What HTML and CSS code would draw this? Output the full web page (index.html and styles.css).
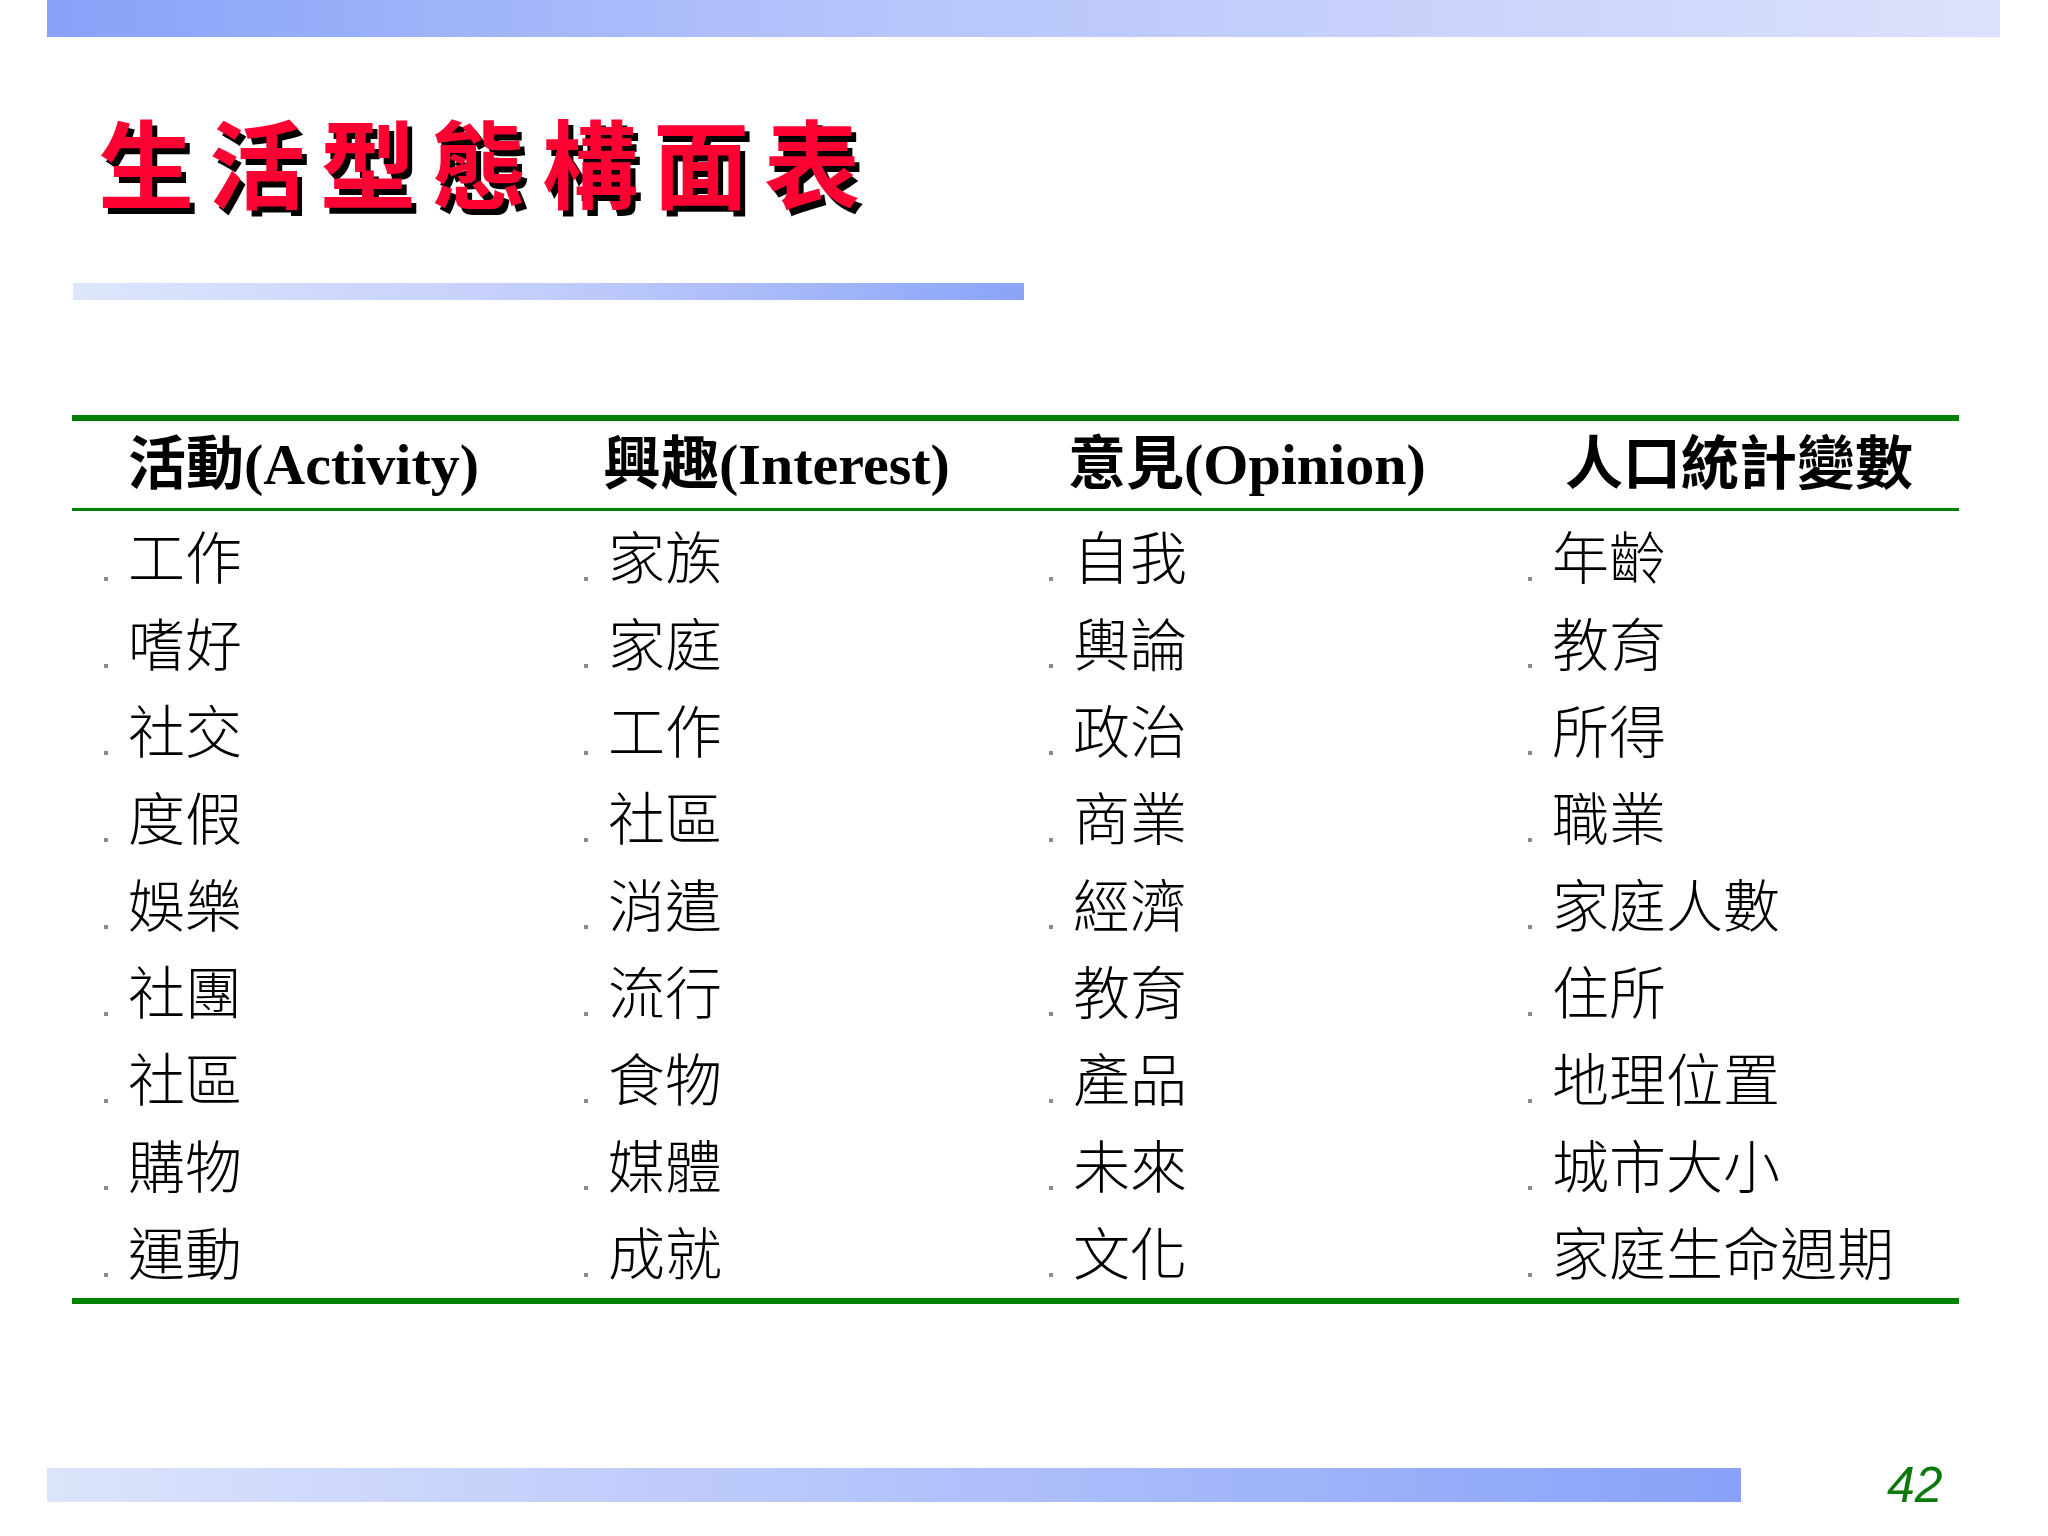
FILE: index.html
```html
<!DOCTYPE html>
<html lang="zh-Hant">
<head>
<meta charset="utf-8">
<title>生活型態構面表</title>
<link rel="stylesheet" href="styles.css">
</head>
<body>
<div class="slide">
  <div class="topbar"></div>
  <h1 class="title">生活型態構面表</h1>
  <div class="rule"></div>
  <div class="table">
    <div class="row head">
      <div class="hcell c1">活動(Activity)</div>
      <div class="hcell c2">興趣(Interest)</div>
      <div class="hcell c3">意見(Opinion)</div>
      <div class="hcell c4">人口統計變數</div>
    </div>
    <div class="body">
      <div class="row"><div class="cell">工作</div><div class="cell">家族</div><div class="cell">自我</div><div class="cell">年齡</div></div>
      <div class="row"><div class="cell">嗜好</div><div class="cell">家庭</div><div class="cell">輿論</div><div class="cell">教育</div></div>
      <div class="row"><div class="cell">社交</div><div class="cell">工作</div><div class="cell">政治</div><div class="cell">所得</div></div>
      <div class="row"><div class="cell">度假</div><div class="cell">社區</div><div class="cell">商業</div><div class="cell">職業</div></div>
      <div class="row"><div class="cell">娛樂</div><div class="cell">消遣</div><div class="cell">經濟</div><div class="cell">家庭人數</div></div>
      <div class="row"><div class="cell">社團</div><div class="cell">流行</div><div class="cell">教育</div><div class="cell">住所</div></div>
      <div class="row"><div class="cell">社區</div><div class="cell">食物</div><div class="cell">產品</div><div class="cell">地理位置</div></div>
      <div class="row"><div class="cell">購物</div><div class="cell">媒體</div><div class="cell">未來</div><div class="cell">城市大小</div></div>
      <div class="row"><div class="cell">運動</div><div class="cell">成就</div><div class="cell">文化</div><div class="cell">家庭生命週期</div></div>
    </div>
  </div>
  <div class="footer">
    <div class="footbar"></div>
    <div class="pagenum">42</div>
  </div>
</div>
</body>
</html>
```
FILE: styles.css
```css
html, body {
  margin: 0;
  padding: 0;
  background: #ffffff;
}
.slide {
  width: 2048px;
  height: 1536px;
  position: relative;
  overflow: hidden;
  font-family: "Noto Sans CJK TC", sans-serif;
}
.topbar {
  margin-left: 47px;
  width: 1953px;
  height: 37px;
  background: linear-gradient(to right, #88a2f8 0%, #b4c3fb 40%, #dde1fb 100%);
}
.title {
  margin: 75px 0 0 98px;
  font-family: "Noto Sans CJK TC", sans-serif;
  font-weight: 700;
  font-size: 96px;
  line-height: 96px;
  letter-spacing: 15px;
  color: #ff0033;
  text-shadow: 5px 6px 0 #000000;
}
.rule {
  margin: 75px 0 0 73px;
  width: 951px;
  height: 17px;
  background: linear-gradient(to right, #dde6fb 0%, #c3cdfb 50%, #8aa4f8 100%);
}
.table {
  margin: 115px 0 0 72px;
  width: 1887px;
  border-top: 6px solid #008000;
  border-bottom: 6px solid #008000;
}
.row {
  display: grid;
  grid-template-columns: 480px 465px 479px 1fr;
  padding-left: 32px;
  height: 87px;
  align-items: center;
}
.head {
  height: 87px;
  border-bottom: 3px solid #008000;
}
.hcell {
  font-family: "Liberation Serif", "Noto Sans CJK TC", serif;
  font-weight: 700;
  font-size: 58px;
  line-height: 1;
  color: #000;
}
.c1 { padding-left: 24px; }
.c2 { padding-left: 19px; }
.c3 { padding-left: 19px; }
.c4 { padding-left: 37px; }
.body {
  padding-bottom: 4px;
}
.cell {
  position: relative;
  padding-left: 24px;
  font-family: "Noto Sans CJK TC", sans-serif;
  font-weight: 300;
  font-size: 57px;
  line-height: 1;
  color: #000;
}
.cell::before {
  content: "";
  position: absolute;
  left: 0;
  bottom: 2px;
  width: 4px;
  height: 4px;
  background: #8a8a8a;
}
.footer {
  display: flex;
  align-items: center;
  margin-top: 156px;
  margin-left: 47px;
}
.footbar {
  width: 1694px;
  height: 34px;
  background: linear-gradient(to right, #dce4fb 0%, #b8c6fb 45%, #88a2f8 100%);
}
.pagenum {
  margin-left: 146px;
  font-family: "Liberation Sans", Arial, sans-serif;
  font-style: italic;
  font-size: 50px;
  line-height: 1;
  color: #0b7a0b;
}
```
